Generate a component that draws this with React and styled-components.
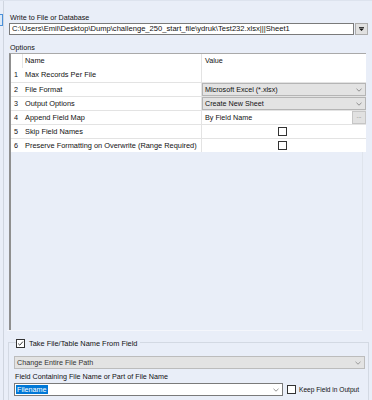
import styled, { createGlobalStyle } from 'styled-components';

const GlobalStyle = createGlobalStyle`
  body {
    margin: 0;
    background: #e9eef8;
    font-family: "Liberation Sans", Arial, sans-serif;
    font-size: 7.2px;
    color: #111;
  }
`;

const rows = [
  { no: 1, name: 'Max Records Per File', kind: 'empty' },
  { no: 2, name: 'File Format', kind: 'select', value: 'Microsoft Excel (*.xlsx)' },
  { no: 3, name: 'Output Options', kind: 'select', value: 'Create New Sheet' },
  { no: 4, name: 'Append Field Map', kind: 'browse', value: 'By Field Name' },
  { no: 5, name: 'Skip Field Names', kind: 'check' },
  { no: 6, name: 'Preserve Formatting on Overwrite (Range Required)', kind: 'check' },
];

const Chevron = ({ color = '#777' }) => (
  <svg width="6" height="4" viewBox="0 0 6 4">
    <polyline points="0.5,0.8 3,3.2 5.5,0.8" fill="none" stroke={color} strokeWidth="0.8" />
  </svg>
);

const App = () => {
  return (
    <>
      <GlobalStyle />
      <Page>
        <LeftEdge>
          <EdgeButton />
        </LeftEdge>
        <Main>
          <Label $top="12px">Write to File or Database</Label>
          <PathRow>
            <PathInput>C:\Users\Emil\Desktop\Dump\challenge_250_start_file\ydruk\Test232.xlsx|||Sheet1</PathInput>
            <DropButton>
              <svg width="5" height="4" viewBox="0 0 5 4">
                <rect x="0" y="0" width="5" height="0.8" fill="#111" />
                <polygon points="0,1.5 5,1.5 2.5,4" fill="#111" />
              </svg>
            </DropButton>
          </PathRow>
          <Label $top="8px">Options</Label>
          <OptionsPanel>
            <Grid>
              <HeaderRow>
                <NumCell $header />
                <NameCell>Name</NameCell>
                <ValueCell>Value</ValueCell>
              </HeaderRow>
              {rows.map((r) => (
                <Row key={r.no} $line={r.no > 1}>
                  <NumCell>{r.no}</NumCell>
                  <NameCell>{r.name}</NameCell>
                  <ValueCell $flush={r.kind !== 'empty'}>
                    {r.kind === 'select' && (
                      <SelectBox>
                        <span>{r.value}</span>
                        <Chevron />
                      </SelectBox>
                    )}
                    {r.kind === 'browse' && (
                      <BrowseBox>
                        <span>{r.value}</span>
                        <EllipsisButton>...</EllipsisButton>
                      </BrowseBox>
                    )}
                    {r.kind === 'check' && (
                      <CheckCenter>
                        <CheckBox />
                      </CheckCenter>
                    )}
                  </ValueCell>
                </Row>
              ))}
            </Grid>
          </OptionsPanel>
          <GroupBox>
            <Legend>
              <CheckBox $checked>
                <svg width="7" height="7" viewBox="0 0 7 7">
                  <polyline points="1.2,3.6 2.8,5.2 5.9,1.6" fill="none" stroke="#222" strokeWidth="0.9" />
                </svg>
              </CheckBox>
              <span>Take File/Table Name From Field</span>
            </Legend>
            <DisabledSelect>
              <span>Change Entire File Path</span>
              <Chevron color="#888" />
            </DisabledSelect>
            <Label $top="3px">Field Containing File Name or Part of File Name</Label>
            <FieldRow>
              <Combo>
                <Selected>Filename</Selected>
                <Chevron />
              </Combo>
              <CheckLabel>
                <CheckBox />
                <span>Keep Field in Output</span>
              </CheckLabel>
            </FieldRow>
          </GroupBox>
        </Main>
      </Page>
    </>
  );
};

const Page = styled.div`
  display: flex;
  width: 372px;
  height: 400px;
  overflow: hidden;
  border-top: 1px solid #dde3ee;
  box-sizing: border-box;
`;

const LeftEdge = styled.div`
  width: 3px;
  border-right: 1px solid #cfd5df;
  padding-top: 13px;
  flex: none;
`;

const EdgeButton = styled.div`
  width: 2px;
  height: 10px;
  border: 1px solid #4a90d9;
  border-left: none;
  background: #dce9f8;
`;

const Main = styled.div`
  flex: 1;
  display: flex;
  flex-direction: column;
  padding: 0 5px 0 5px;
`;

const Label = styled.div`
  margin-top: ${(p) => p.$top};
  margin-left: 1px;
  line-height: 9px;
  white-space: nowrap;
`;

const PathRow = styled.div`
  display: flex;
  height: 12px;
  margin-top: 1px;
  gap: 1px;
`;

const PathInput = styled.div`
  width: 345px;
  box-sizing: border-box;
  border: 1px solid #7a7a7a;
  background: #fff;
  line-height: 10px;
  padding-left: 2px;
  font-size: 7.6px;
  white-space: nowrap;
  overflow: hidden;
`;

const DropButton = styled.div`
  width: 13px;
  box-sizing: border-box;
  border: 1px solid #adadad;
  background: #e1e1e1;
  display: flex;
  align-items: center;
  justify-content: center;
`;

const OptionsPanel = styled.div`
  margin-top: 1px;
  height: 277px;
  display: flex;
  border-right: 1px solid #dfe4ec;
  border-bottom: 1px solid #f4f6fb;
  width: 353px;
  margin-left: -2px;
  padding-left: 2px;
`;

const Grid = styled.div`
  width: 355px;
  border-left: 2px solid #8f8f8f;
  border-top: 1px solid #a9a9a9;
  display: flex;
  flex-direction: column;
  align-self: stretch;
  margin-right: -6px;
`;

const HeaderRow = styled.div`
  display: flex;
  height: 14px;
  background: #fff;
`;

const Row = styled.div`
  display: flex;
  height: 14px;
  background: #fff;
  border-top: ${(p) => (p.$line ? '1px solid #e3e3e3' : 'none')};
  box-sizing: border-box;
`;

const NumCell = styled.div`
  width: 12px;
  flex: none;
  box-sizing: border-box;
  border-right: ${(p) => (p.$header ? '1px solid #e6e6e6' : 'none')};
  padding-left: 3px;
  line-height: 14px;
`;

const NameCell = styled.div`
  width: 179px;
  flex: none;
  box-sizing: border-box;
  border-right: 1px solid #e3e3e3;
  padding-left: 2px;
  line-height: 14px;
  font-size: 7.4px;
  white-space: nowrap;
  overflow: hidden;
`;

const ValueCell = styled.div`
  flex: 1;
  padding-left: ${(p) => (p.$flush ? '0' : '3px')};
  line-height: 14px;
  display: flex;
  align-items: ${(p) => (p.$flush ? 'stretch' : 'flex-start')};
`;

const SelectBox = styled.div`
  flex: 1;
  display: flex;
  align-items: center;
  justify-content: space-between;
  background: #e3e3e3;
  border: 1px solid #b5b5b5;
  padding: 0 3px 0 2px;
  line-height: 11px;
`;

const BrowseBox = styled.div`
  flex: 1;
  display: flex;
  align-items: stretch;
  justify-content: space-between;
  padding-left: 3px;
  line-height: 13px;
`;

const EllipsisButton = styled.div`
  width: 12px;
  background: #e1e1e1;
  border: 1px solid #c6c6c6;
  color: #666;
  font-size: 6px;
  line-height: 9px;
  text-align: center;
`;

const CheckCenter = styled.div`
  flex: 1;
  display: flex;
  align-items: center;
  justify-content: center;
  padding-right: 3px;
`;

const CheckBox = styled.div`
  width: 7px;
  height: 7px;
  flex: none;
  border: 1px solid #333;
  background: #fff;
  display: flex;
  align-items: center;
  justify-content: center;
  svg {
    display: block;
  }
`;

const GroupBox = styled.div`
  margin-top: 11px;
  margin-left: -1px;
  margin-right: -1px;
  flex: 1;
  border: 1px solid #d3d9e3;
  border-bottom: none;
  padding: 0 3px 0 5px;
  display: flex;
  flex-direction: column;
`;

const Legend = styled.div`
  display: flex;
  align-items: center;
  gap: 4px;
  margin-top: -4px;
  margin-left: 2px;
  padding-right: 3px;
  align-self: flex-start;
  background: #e9eef8;
  line-height: 9px;
  font-size: 7.4px;
`;

const DisabledSelect = styled.div`
  margin-top: 8px;
  height: 13px;
  box-sizing: border-box;
  background: #e3e3e3;
  border: 1px solid #bcbcbc;
  display: flex;
  align-items: center;
  justify-content: space-between;
  padding: 0 3px 0 2px;
  color: #333;
`;

const FieldRow = styled.div`
  display: flex;
  align-items: center;
  gap: 4px;
  margin-top: 2px;
`;

const Combo = styled.div`
  width: 269px;
  height: 13px;
  box-sizing: border-box;
  background: #fff;
  border: 1px solid #7a7a7a;
  display: flex;
  align-items: center;
  justify-content: space-between;
  padding: 0 3px 0 1px;
`;

const Selected = styled.span`
  background: #0078d7;
  color: #fff;
  line-height: 9px;
  padding: 0 1px;
`;

const CheckLabel = styled.div`
  display: flex;
  align-items: center;
  gap: 3px;
  white-space: nowrap;
  font-size: 6.6px;
`;

export default App;
